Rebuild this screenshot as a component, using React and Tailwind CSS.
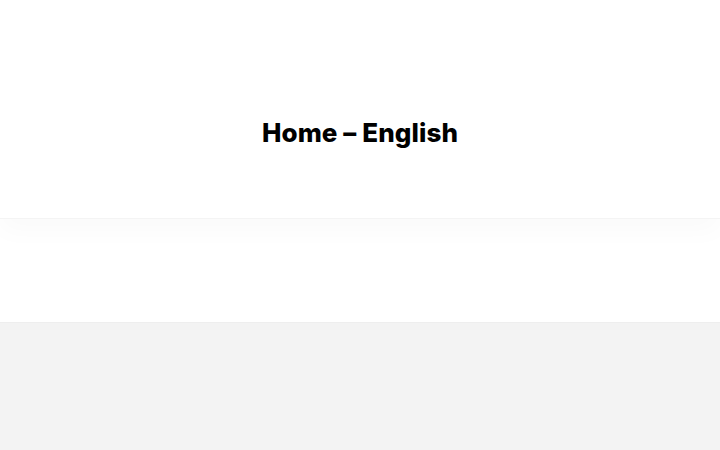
import React from "react";

const App = () => {
	return (
		<div className="min-h-screen bg-[#f3f3f3]" style={{ fontFamily: "Inter, 'Noto Sans', sans-serif" }}>
			<header className="relative z-10 h-[219px] bg-white flex items-center justify-center pt-[46px] border-b border-[#f4f4f4] shadow-[0_12px_24px_rgba(0,0,0,0.025)]">
				<h1 className="text-[26px] font-extrabold text-black tracking-[0.1px]">
					Home – English
				</h1>
			</header>
			<section className="h-[103px] bg-white" />
			<div className="border-t border-[#eeeeee]" />
		</div>
	);
};

export default App;
